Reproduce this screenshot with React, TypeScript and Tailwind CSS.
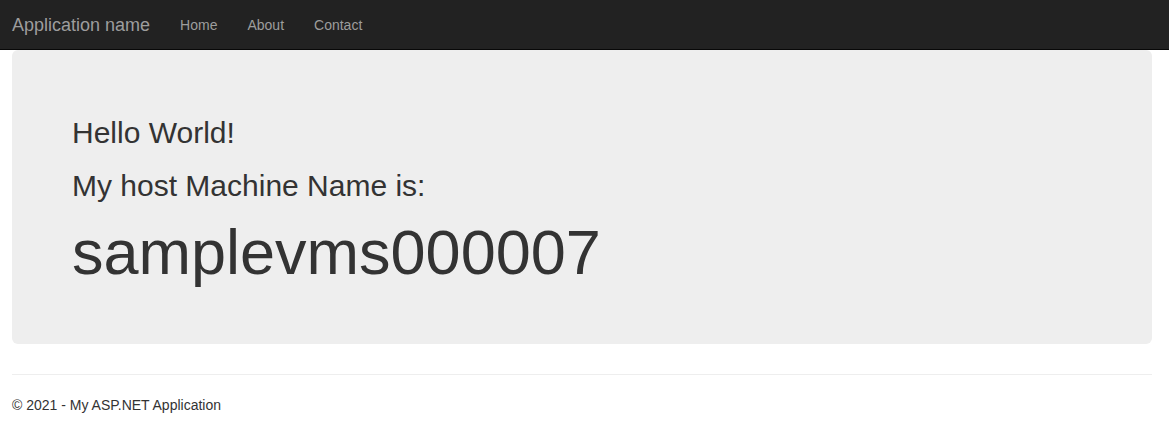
const App = () => {
  const links = ["Home", "About", "Contact"];

  return (
    <div className="min-h-[422px] w-full bg-white text-[#333] font-['Liberation_Sans',Arial,sans-serif]">
      {/* Navbar */}
      <nav className="h-[50px] w-full bg-[#222] border-b border-[#080808]">
        <div className="flex items-start pl-[12px]">
          <a
            href="#"
            className="pt-[15px] pr-[15px] text-[18px] leading-[20px] text-[#9d9d9d]"
          >
            Application name
          </a>
          <ul className="flex">
            {links.map((item) => (
              <li key={item}>
                <a
                  href="#"
                  className="block px-[15px] pt-[15px] text-[14px] leading-[20px] text-[#9d9d9d]"
                >
                  {item}
                </a>
              </li>
            ))}
          </ul>
        </div>
      </nav>

      {/* Body */}
      <div className="ml-[12px] w-[1140px]">
        {/* Jumbotron */}
        <div className="rounded-[6px] bg-[#eee] px-[60px] pt-[66px] pb-[57px]">
          <h2 className="text-[30px] leading-[33px]">Hello World!</h2>
          <h2 className="mt-[20px] text-[30px] leading-[33px]">
            My host Machine Name is:
          </h2>
          <h1 className="mt-[16px] text-[63px] leading-[69px]">samplevms000007</h1>
        </div>

        {/* Footer */}
        <hr className="mt-[30px] border-t border-[#eee]" />
        <footer className="pt-[20px]">
          <p className="text-[14px] leading-[20px]">© 2021 - My ASP.NET Application</p>
        </footer>
      </div>
    </div>
  );
};

export default App;
